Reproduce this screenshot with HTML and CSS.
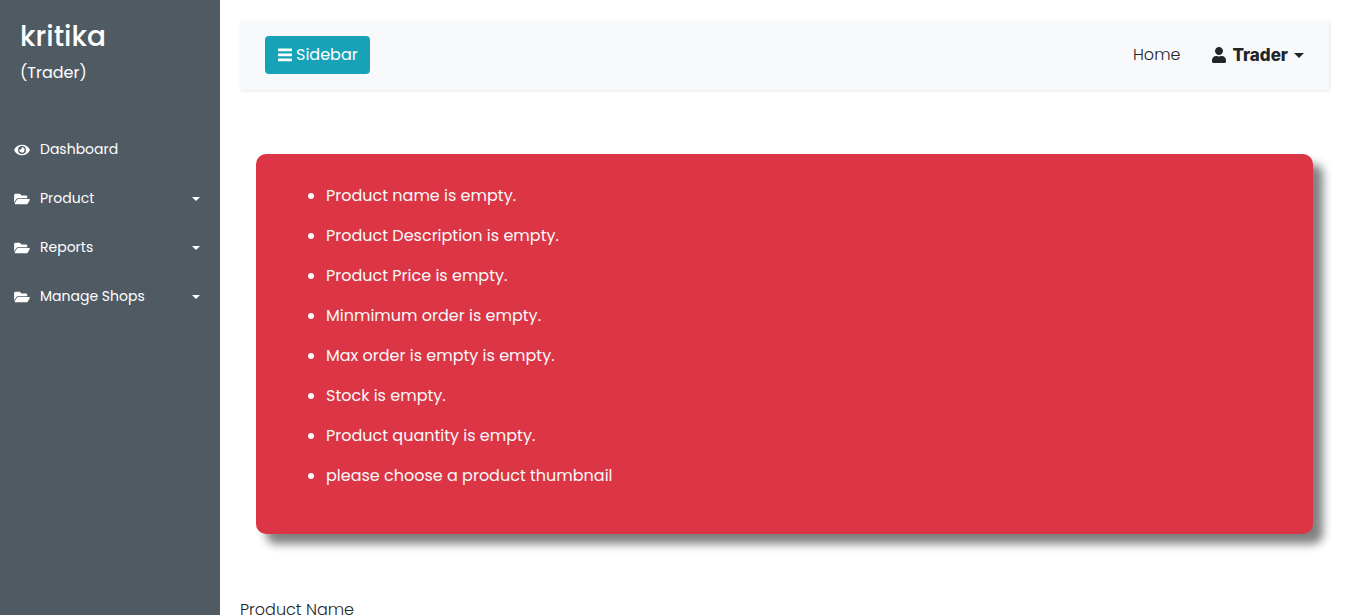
FILE: index.html
```html
<!DOCTYPE html>
<html lang="en">
<head>
<meta charset="utf-8">
<meta name="viewport" content="width=device-width, initial-scale=1">
<title>Trader</title>
<link rel="stylesheet" href="styles.css">
</head>
<body>
<svg class="sprite" aria-hidden="true">
  <symbol id="eye" viewBox="0 0 576 512"><path d="M572.52 241.4C518.29 135.59 410.93 64 288 64S57.68 135.64 3.48 241.41a32.35 32.35 0 0 0 0 29.19C57.71 376.41 165.07 448 288 448s230.32-71.64 284.52-177.41a32.35 32.35 0 0 0 0-29.19zM288 400a144 144 0 1 1 144-144 143.93 143.93 0 0 1-144 144zm0-240a95.31 95.31 0 0 0-25.31 3.79 47.85 47.85 0 0 1-66.9 66.9A95.78 95.78 0 1 0 288 160z"/></symbol>
  <symbol id="folder" viewBox="0 0 576 512"><path d="M572.694 292.093L500.27 416.248A63.997 63.997 0 0 1 444.989 448H45.025c-18.523 0-30.064-20.093-20.731-36.093l72.424-124.155A64 64 0 0 1 152 256h399.964c18.523 0 30.064 20.093 20.73 36.093zM152 224h328v-48c0-26.51-21.49-48-48-48H272l-64-64H48C21.49 64 0 85.49 0 112v278.046l69.077-118.418C86.214 242.25 117.989 224 152 224z"/></symbol>
  <symbol id="bars" viewBox="0 0 448 512"><path d="M16 132h416c8.837 0 16-7.163 16-16V60c0-8.837-7.163-16-16-16H16C7.163 44 0 51.163 0 60v56c0 8.837 7.163 16 16 16zm0 160h416c8.837 0 16-7.163 16-16v-56c0-8.837-7.163-16-16-16H16c-8.837 0-16 7.163-16 16v56c0 8.837 7.163 16 16 16zm0 160h416c8.837 0 16-7.163 16-16v-56c0-8.837-7.163-16-16-16H16c-8.837 0-16 7.163-16 16v56c0 8.837 7.163 16 16 16z"/></symbol>
  <symbol id="user" viewBox="0 0 448 512"><path d="M224 256c70.7 0 128-57.3 128-128S294.7 0 224 0 96 57.3 96 128s57.3 128 128 128zm89.600 32h-16.7c-22.200 10.200-46.900 16-72.900 16s-50.600-5.800-72.900-16h-16.7C60.200 288 0 348.200 0 422.400V464c0 26.500 21.500 48 48 48h352c26.500 0 48-21.500 48-48v-41.600c0-74.200-60.200-134.400-134.400-134.400z"/></symbol>
</svg>
<div class="page">
  <nav class="sidebar" aria-label="Trader menu">
    <header class="profile">
      <h1 class="profile-name">kritika</h1>
      <p class="profile-role">(Trader)</p>
    </header>
    <ul class="menu">
      <li><a class="menu-link" href="#"><svg class="menu-icon"><use href="#eye"/></svg>Dashboard</a></li>
      <li><a class="menu-link" href="#"><svg class="menu-icon"><use href="#folder"/></svg>Product<span class="caret"></span></a></li>
      <li><a class="menu-link" href="#"><svg class="menu-icon"><use href="#folder"/></svg>Reports<span class="caret"></span></a></li>
      <li><a class="menu-link" href="#"><svg class="menu-icon"><use href="#folder"/></svg>Manage Shops<span class="caret"></span></a></li>
    </ul>
  </nav>
  <main class="content">
    <div class="topbar">
      <button class="toggle" type="button"><svg class="toggle-icon"><use href="#bars"/></svg>Sidebar</button>
      <div class="topnav">
        <a class="home" href="#">Home</a>
        <a class="account" href="#"><svg class="account-icon"><use href="#user"/></svg>Trader<span class="caret"></span></a>
      </div>
    </div>
    <div class="alert" role="alert">
      <ul class="errors">
        <li>Product name is empty.</li>
        <li>Product Description is empty.</li>
        <li>Product Price is empty.</li>
        <li>Minmimum order is empty.</li>
        <li>Max order is empty is empty.</li>
        <li>Stock is empty.</li>
        <li>Product quantity is empty.</li>
        <li>please choose a product thumbnail</li>
      </ul>
    </div>
    <form class="form">
      <label for="product-name">Product Name</label>
      <input class="field" id="product-name" type="text">
    </form>
  </main>
</div>
</body>
</html>
```
FILE: styles.css
```css
* { box-sizing: border-box; }
body {
  margin: 0;
  font: 300 16px/24px Poppins, Inter, sans-serif;
  color: #212529;
  background: #fff;
}
a { color: inherit; text-decoration: none; }
svg { fill: currentColor; }
.sprite { display: none; }
.page { display: flex; height: 100vh; }
.sidebar {
  flex: 0 0 220px;
  color: #fff;
  background: #505a63;
  font-weight: 400;
}
.profile { padding: 20px; }
.profile-name { margin: 0 0 8px; font-size: 28px; line-height: 33px; font-weight: 500; }
.profile-role { margin: 0; }
.menu { margin: 0; padding: 20px 0; list-style: none; }
.menu-link {
  display: flex;
  align-items: center;
  padding: 13px 20px 13px 14px;
  font-size: 14px;
  line-height: 23px;
}
.menu-icon { width: 16px; height: 14px; margin-right: 10px; }
.caret {
  margin-left: auto;
  border: 5px solid transparent;
  border-top-color: currentColor;
  border-bottom: 0;
}
.menu .caret { border-width: 4px 4px 0; }
.content {
  flex: 1;
  min-width: 0;
  padding: 20px 16px 20px 20px;
  overflow-y: auto;
  scrollbar-width: none;
}
.topbar {
  display: flex;
  align-items: center;
  justify-content: space-between;
  padding: 16px 25px;
  background: #f8f9fb;
  box-shadow: 1px 1px 3px rgba(0, 0, 0, 0.1);
}
.toggle {
  display: flex;
  align-items: center;
  gap: 4px;
  padding: 7px 12px 7px 13px;
  border: 0;
  border-radius: 4px;
  color: #fff;
  background: #17a2b8;
  font: inherit;
  font-weight: 400;
}
.toggle-icon { width: 14px; height: 16px; }
.topnav { display: flex; align-items: center; gap: 32px; }
.account {
  display: flex;
  align-items: center;
  font-family: Inter, sans-serif;
  font-size: 17px;
  font-weight: 800;
}
.account-icon { width: 14px; height: 16px; margin-right: 6px; }
.account .caret { margin-left: 6px; }
.alert {
  margin: 64px 16px;
  padding: 30px;
  border-radius: 10px;
  color: #f8f9fa;
  background: #dc3545;
  box-shadow: 10px 10px 10px #808080;
  font-weight: 400;
}
.errors { margin: 0; padding-left: 40px; }
.errors li { margin-bottom: 16px; }
.form { display: grid; gap: 8px; }
.field { height: 38px; border: 1px solid #ced4da; border-radius: 4px; }
```
